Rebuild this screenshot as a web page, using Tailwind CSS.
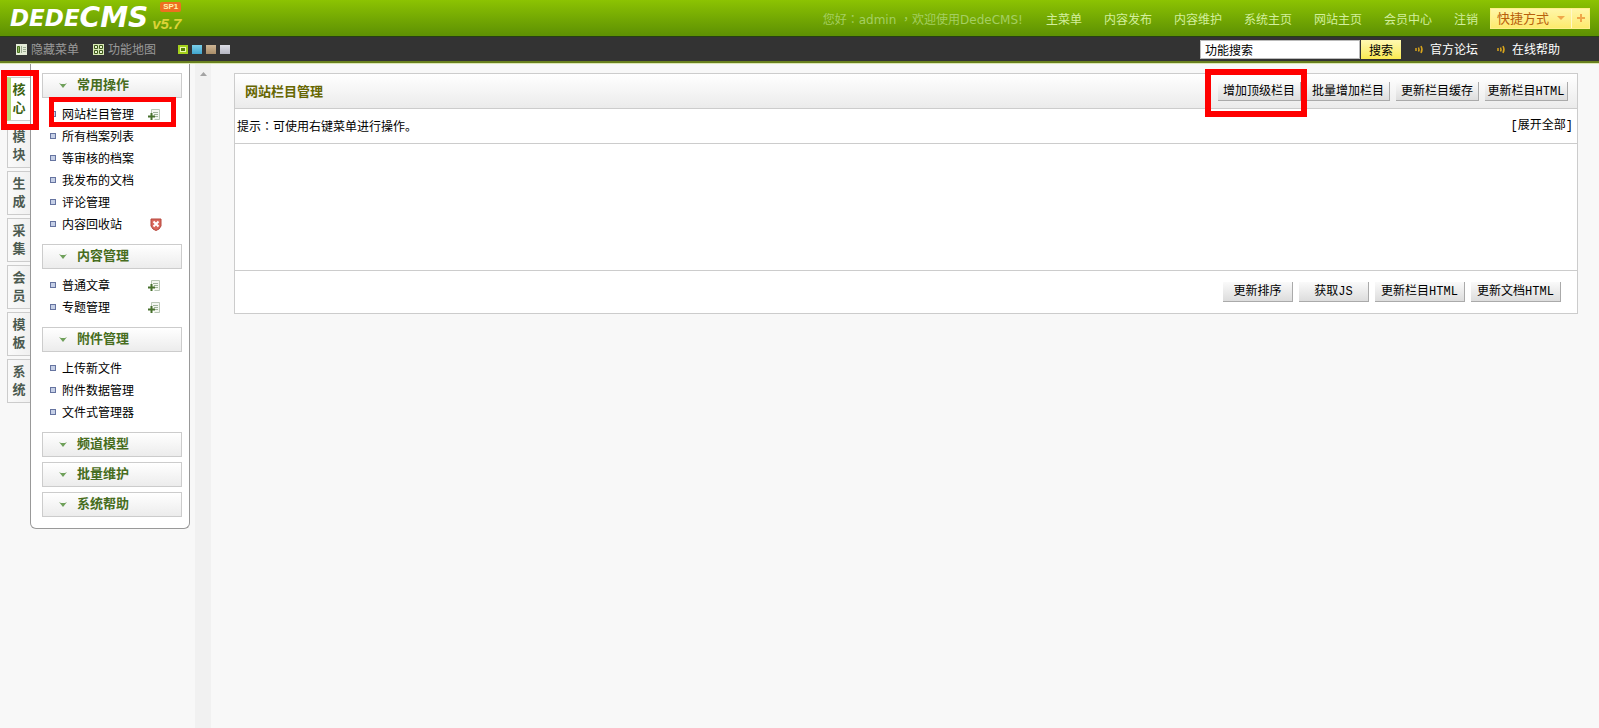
<!DOCTYPE html>
<html lang="zh-CN">
<head>
<meta charset="utf-8">
<title>DedeCMS</title>
<script src="https://cdn.jsdelivr.net/npm/@tailwindcss/browser@4"></script>
</head>
<body class="relative flex min-h-screen flex-col bg-[#f8f8f8] font-['Noto_Sans_CJK_SC',sans-serif] text-xs text-black">
<svg class="hidden">
  <symbol id="add" viewBox="0 0 13 13"><path d="M3.500 1.500h8v10h-5" fill="#f4f7f1" stroke="#b9c7b5"/><path d="M3.500 6V1.500" stroke="#b9c7b5"/><path d="M5 4.500h5M6 6.500h4M7 8.500h3" stroke="#9fb29a"/><path d="M0 8.500h7M3.500 5v7" stroke="#47702c" stroke-width="2"/></symbol>
  <symbol id="bin" viewBox="0 0 12 13"><path d="M1 1h10v7l-2 3-3 1.500L3 11 1 8z" fill="#d9685c" stroke="#b5473d"/><path d="M3.500 3.500l5 5M8.500 3.500l-5 5" stroke="#fff" stroke-width="2"/></symbol>
  <symbol id="arr" viewBox="0 0 8 5"><path d="M0 0l2 1h4l2-1-4 5z" fill="#6fa05a"/></symbol>
  <symbol id="snd" viewBox="0 0 9 9"><path d="M1 3v3M3.500 2.500q1 2 0 4M6 1q2 3.500 0 7" fill="none" stroke="#d9a51c" stroke-width="1.500"/></symbol>
</svg>

<header>
  <div class="flex h-9 items-center justify-between bg-linear-to-b from-[#8cc302] to-[#5d9003] pr-[9px] pl-[10px]">
    <div class="flex h-9 items-end font-['DejaVu_Sans',sans-serif] font-bold italic text-white">
      <span class="text-[23px] leading-9">DEDE</span><span class="text-[28px] leading-9">CMS</span>
      <span class="relative ml-1 font-['Liberation_Sans',sans-serif] text-[15px] leading-6 text-[#dcd337]">v5.7<span class="absolute -top-[10px] left-2 rounded-xs bg-[#ee7020] px-[3px] text-[8px] leading-[10px] text-[#fff3b0] not-italic">SP1</span></span>
    </div>
    <div class="flex items-center gap-3">
      <p class="mr-[11px] pt-[2px] font-['DejaVu_Sans','Noto_Sans_CJK_SC',sans-serif] text-[#a5cf62]">您好<span lang="zh-TW" class="font-['Noto_Sans_CJK_TC',sans-serif]">：</span>admin <span lang="zh-TW" class="font-['Noto_Sans_CJK_TC',sans-serif]">，</span>欢迎使用DedeCMS!</p>
      <nav class="flex gap-[22px] pt-[2px] text-[#d3ef9d]">
        <a href="#">主菜单</a><a href="#">内容发布</a><a href="#">内容维护</a><a href="#">系统主页</a><a href="#">网站主页</a><a href="#">会员中心</a><a href="#">注销</a>
      </nav>
      <div class="flex h-[21px] border border-[#fff08a] bg-linear-to-b from-[#fff6a8] to-[#fdea6c] text-[13px] leading-[18px] text-[#b8600c]">
        <button class="flex w-20 items-center gap-2 pl-[6px]">快捷方式<svg class="h-1 w-2" viewBox="0 0 8 4"><path d="M0 0h8L4 4z" fill="#efa74a"/></svg></button>
        <button class="flex w-[18px] items-center justify-center border-l border-[#fff8c8]" aria-label="添加"><svg class="size-2" viewBox="0 0 8 8"><path d="M0 4h8M4 0v8" stroke="#efa74a" stroke-width="2"/></svg></button>
      </div>
    </div>
  </div>
  <div class="flex h-[27px] items-center justify-between border-t border-b-2 border-t-[#263f16] border-b-[#69801f] bg-[#333] pr-[39px] pl-4 text-[#999]">
    <div class="flex items-center">
      <a href="#" class="flex items-center gap-1"><svg class="h-[11px] w-[11px]" viewBox="0 0 11 11"><path d="M0 0h11v11H0z" fill="#e4ebd8"/><path d="M1.500 2.500h2v6h-2z" fill="#8fae66" stroke="#46711b"/><path d="M5.500 2v7M7 3.500h3M7 5.500h3M7 7.500h3" stroke="#9cac93"/></svg>隐藏菜单</a>
      <a href="#" class="ml-[14px] flex items-center gap-1"><svg class="h-[11px] w-[11px]" viewBox="0 0 11 11"><path d="M0 0h11v11H0z" fill="#d7e8b4"/><path d="M1.500 1.500h3v3h-3zM6.500 1.500h3v3h-3zM1.500 6.500h3v3h-3zM6.500 6.500h3v3h-3z" fill="#e9f3d2" stroke="#3f5a1c"/></svg>功能地图</a>
      <div class="ml-[22px] flex gap-1">
        <button aria-label="绿色" class="h-[9px] w-[10px] border-2 border-[#a5d11c] bg-[#edf9b0] p-px"><span class="block h-[3px] w-1 bg-[#557c08]"></span></button>
        <button aria-label="蓝色" class="h-[9px] w-[10px] bg-linear-to-b from-[#7bd0ea] to-[#3fa4cc]"></button>
        <button aria-label="棕色" class="h-[9px] w-[10px] bg-linear-to-b from-[#cdb595] to-[#a98d68]"></button>
        <button aria-label="灰色" class="h-[9px] w-[10px] bg-linear-to-b from-[#dcdde5] to-[#b5b6c2]"></button>
      </div>
    </div>
    <div class="flex items-center text-white">
      <input aria-label="功能搜索" value="功能搜索" class="h-[19px] w-40 border border-[#bbb] bg-white px-1 text-black">
      <button class="ml-px h-[19px] w-10 bg-linear-to-b from-[#fff8b0] to-[#f9e94c] leading-[19px] text-black">搜索</button>
      <a href="#" class="ml-[14px] flex items-center gap-[6px]"><svg class="size-[9px]"><use href="#snd"/></svg>官方论坛</a>
      <a href="#" class="ml-[19px] flex items-center gap-[6px]"><svg class="size-[9px]"><use href="#snd"/></svg>在线帮助</a>
    </div>
  </div>
  <div class="h-px bg-[#dce8b4]"></div>
</header>

<div class="flex grow">
  <aside class="flex w-[195px] shrink-0 items-start pl-[7px]">
    <nav class="mt-[13px] flex w-[23px] flex-col gap-[3px] text-center text-[13px] leading-[18px] font-bold text-[#4c5a50]">
      <a href="#" class="h-11 border border-r-0 border-l-4 border-[#ccc] border-l-[#b5dc7c] bg-white py-[2px] pr-[3px] text-[#3c6311]">核<br>心</a>
      <a href="#" class="h-11 border border-r-0 border-[#ccc] bg-linear-to-r from-[#fafafa] to-[#f0f0f0] px-1 py-[2px]">模<br>块</a>
      <a href="#" class="h-11 border border-r-0 border-[#ccc] bg-linear-to-r from-[#fafafa] to-[#f0f0f0] px-1 py-[2px]">生<br>成</a>
      <a href="#" class="h-11 border border-r-0 border-[#ccc] bg-linear-to-r from-[#fafafa] to-[#f0f0f0] px-1 py-[2px]">采<br>集</a>
      <a href="#" class="h-11 border border-r-0 border-[#ccc] bg-linear-to-r from-[#fafafa] to-[#f0f0f0] px-1 py-[2px]">会<br>员</a>
      <a href="#" class="h-11 border border-r-0 border-[#ccc] bg-linear-to-r from-[#fafafa] to-[#f0f0f0] px-1 py-[2px]">模<br>板</a>
      <a href="#" class="h-11 border border-r-0 border-[#ccc] bg-linear-to-r from-[#fafafa] to-[#f0f0f0] px-1 py-[2px]">系<br>统</a>
    </nav>
    <div class="w-40 rounded-b-md border border-t-0 border-[#999] bg-white pt-[9px] pr-[7px] pb-[11px] pl-[11px]">
      <h2 class="flex h-[25px] items-center gap-[10px] border border-[#ccc] bg-linear-to-b from-white to-[#ececec] pl-4 text-[13px] font-bold text-[#476d20]"><svg class="h-[5px] w-2"><use href="#arr"/></svg><button class="pb-[3px]">常用操作</button></h2>
      <ul class="mt-[5px] mb-[9px] pl-2 leading-[22px]">
        <li class="flex items-center"><i class="mr-[6px] size-[6px] border border-[#6674a0] bg-[#c5cfe6]"></i><a href="#">网站栏目管理</a><svg class="mr-[21px] ml-auto size-[13px]"><use href="#add"/></svg></li>
        <li class="flex items-center"><i class="mr-[6px] size-[6px] border border-[#6674a0] bg-[#c5cfe6]"></i><a href="#">所有档案列表</a></li>
        <li class="flex items-center"><i class="mr-[6px] size-[6px] border border-[#6674a0] bg-[#c5cfe6]"></i><a href="#">等审核的档案</a></li>
        <li class="flex items-center"><i class="mr-[6px] size-[6px] border border-[#6674a0] bg-[#c5cfe6]"></i><a href="#">我发布的文档</a></li>
        <li class="flex items-center"><i class="mr-[6px] size-[6px] border border-[#6674a0] bg-[#c5cfe6]"></i><a href="#">评论管理</a></li>
        <li class="flex items-center"><i class="mr-[6px] size-[6px] border border-[#6674a0] bg-[#c5cfe6]"></i><a href="#">内容回收站</a><svg class="mr-5 ml-auto h-[13px] w-3"><use href="#bin"/></svg></li>
      </ul>
      <h2 class="flex h-[25px] items-center gap-[10px] border border-[#ccc] bg-linear-to-b from-white to-[#ececec] pl-4 text-[13px] font-bold text-[#476d20]"><svg class="h-[5px] w-2"><use href="#arr"/></svg><button class="pb-[3px]">内容管理</button></h2>
      <ul class="mt-[5px] mb-[9px] pl-2 leading-[22px]">
        <li class="flex items-center"><i class="mr-[6px] size-[6px] border border-[#6674a0] bg-[#c5cfe6]"></i><a href="#">普通文章</a><svg class="mr-[21px] ml-auto size-[13px]"><use href="#add"/></svg></li>
        <li class="flex items-center"><i class="mr-[6px] size-[6px] border border-[#6674a0] bg-[#c5cfe6]"></i><a href="#">专题管理</a><svg class="mr-[21px] ml-auto size-[13px]"><use href="#add"/></svg></li>
      </ul>
      <h2 class="flex h-[25px] items-center gap-[10px] border border-[#ccc] bg-linear-to-b from-white to-[#ececec] pl-4 text-[13px] font-bold text-[#476d20]"><svg class="h-[5px] w-2"><use href="#arr"/></svg><button class="pb-[3px]">附件管理</button></h2>
      <ul class="mt-[5px] mb-[9px] pl-2 leading-[22px]">
        <li class="flex items-center"><i class="mr-[6px] size-[6px] border border-[#6674a0] bg-[#c5cfe6]"></i><a href="#">上传新文件</a></li>
        <li class="flex items-center"><i class="mr-[6px] size-[6px] border border-[#6674a0] bg-[#c5cfe6]"></i><a href="#">附件数据管理</a></li>
        <li class="flex items-center"><i class="mr-[6px] size-[6px] border border-[#6674a0] bg-[#c5cfe6]"></i><a href="#">文件式管理器</a></li>
      </ul>
      <div class="flex flex-col gap-[5px]">
        <h2 class="flex h-[25px] items-center gap-[10px] border border-[#ccc] bg-linear-to-b from-white to-[#ececec] pl-4 text-[13px] font-bold text-[#476d20]"><svg class="h-[5px] w-2"><use href="#arr"/></svg><button class="pb-[3px]">频道模型</button></h2>
        <h2 class="flex h-[25px] items-center gap-[10px] border border-[#ccc] bg-linear-to-b from-white to-[#ececec] pl-4 text-[13px] font-bold text-[#476d20]"><svg class="h-[5px] w-2"><use href="#arr"/></svg><button class="pb-[3px]">批量维护</button></h2>
        <h2 class="flex h-[25px] items-center gap-[10px] border border-[#ccc] bg-linear-to-b from-white to-[#ececec] pl-4 text-[13px] font-bold text-[#476d20]"><svg class="h-[5px] w-2"><use href="#arr"/></svg><button class="pb-[3px]">系统帮助</button></h2>
      </div>
    </div>
  </aside>
  <div class="flex w-4 shrink-0 justify-center bg-[#f1f1f1] pt-2"><svg class="h-1 w-[7px]" viewBox="0 0 7 4"><path d="M0 4h7L3.500 0z" fill="#a3a3a3"/></svg></div>

  <main class="grow pt-[9px] pr-[21px] pl-[23px]">
    <section class="divide-y divide-[#ccc] border border-[#ccc] bg-white">
      <div class="flex h-[35px] items-center justify-between bg-linear-to-b from-white to-[#ebebeb] pr-[9px] pl-[10px]">
        <h1 class="text-[13px] leading-4 font-bold text-[#666600]">网站栏目管理</h1>
        <div class="flex gap-[6px] font-['Liberation_Mono','Noto_Sans_CJK_SC',monospace] leading-[18px]">
          <button class="h-[19px] w-[83px] border-r border-b border-[#aaa] bg-linear-to-b from-[#fafafa] to-[#ddd] pt-px">增加顶级栏目</button>
          <button class="h-[19px] w-[83px] border-r border-b border-[#aaa] bg-linear-to-b from-[#fafafa] to-[#ddd] pt-px">批量增加栏目</button>
          <button class="h-[19px] w-[83px] border-r border-b border-[#aaa] bg-linear-to-b from-[#fafafa] to-[#ddd] pt-px">更新栏目缓存</button>
          <button class="h-[19px] w-[83px] border-r border-b border-[#aaa] bg-linear-to-b from-[#fafafa] to-[#ddd] pt-px">更新栏目HTML</button>
        </div>
      </div>
      <div class="flex h-[35px] items-center justify-between pr-1 pl-[2px]"><p>提示<span lang="zh-TW" class="font-['Noto_Sans_CJK_TC',sans-serif]">：</span>可使用右键菜单进行操作。</p><a href="#" class="font-['Liberation_Mono','Noto_Sans_CJK_SC',monospace]">[展开全部]</a></div>
      <div class="h-[127px]"></div>
      <div class="flex h-[42px] items-center justify-end gap-[6px] pr-4 font-['Liberation_Mono','Noto_Sans_CJK_SC',monospace] leading-[18px]">
        <button class="h-5 w-[70px] border-r border-b border-[#aaa] bg-linear-to-b from-[#fafafa] to-[#ddd]">更新排序</button>
        <button class="h-5 w-[70px] border-r border-b border-[#aaa] bg-linear-to-b from-[#fafafa] to-[#ddd]">获取JS</button>
        <button class="h-5 w-[90px] border-r border-b border-[#aaa] bg-linear-to-b from-[#fafafa] to-[#ddd]">更新栏目HTML</button>
        <button class="h-5 w-[90px] border-r border-b border-[#aaa] bg-linear-to-b from-[#fafafa] to-[#ddd]">更新文档HTML</button>
      </div>
    </section>
  </main>
</div>

<!-- highlight frames over the tab, the menu entry and the button -->
<div class="pointer-events-none absolute top-[70px] left-[1px] h-[60px] w-[38px] border-6 border-[#f00]"></div>
<div class="pointer-events-none absolute top-[97px] left-[49px] h-[30px] w-[127px] border-5 border-[#f00]"></div>
<div class="pointer-events-none absolute top-[69px] right-[292px] h-12 w-[102px] border-6 border-[#f00]"></div>
</body>
</html>
